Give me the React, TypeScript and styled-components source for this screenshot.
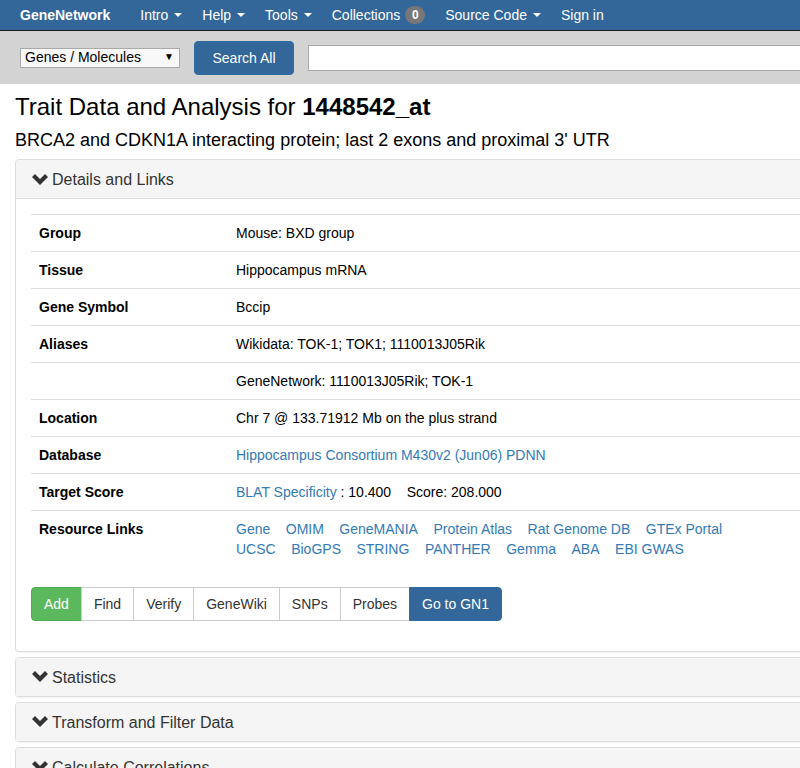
import React from "react";
import styled, { createGlobalStyle } from "styled-components";

const Global = createGlobalStyle`
  html, body { margin: 0; padding: 0; overflow-x: hidden; }
  body {
    font-family: "Liberation Sans", Arial, Helvetica, sans-serif;
    font-size: 14px;
    line-height: 1.42857;
    color: #000;
    background: #fff;
  }
  * { box-sizing: border-box; }
`;

const Page = styled.div`
  width: 1200px;
`;

const NavBar = styled.nav`
  height: 31px;
  background: #336699;
  border-bottom: 1px solid #1a1a1a;
  display: flex;
  align-items: center;
  padding-left: 20px;
  padding-top: 1px;
  color: #fff;
`;

const Brand = styled.span`
  font-weight: bold;
  margin-right: 30px;
`;

const NavItem = styled.span`
  display: inline-flex;
  align-items: center;
  margin-right: 20px;
  color: #fff;
`;

const Caret = styled.span`
  display: inline-block;
  width: 0;
  height: 0;
  margin-left: 6px;
  border-top: 4px solid #fff;
  border-left: 4px solid transparent;
  border-right: 4px solid transparent;
`;

const Badge = styled.span`
  display: inline-block;
  margin-left: 5px;
  min-width: 20px;
  height: 18px;
  padding: 0 6px;
  border-radius: 10px;
  background: #777;
  color: #fff;
  font-size: 12px;
  font-weight: bold;
  line-height: 18px;
  text-align: center;
`;

const SearchBand = styled.div`
  height: 53px;
  background: #d3d3d3;
  display: flex;
  align-items: center;
  padding-left: 20px;
`;

const SelectBox = styled.div`
  width: 160px;
  height: 20px;
  border: 1px solid #a9a9a9;
  background: #f8f8f8;
  display: flex;
  align-items: center;
  justify-content: space-between;
  padding: 0 5px 0 4px;
  font-size: 14px;
  color: #000;
  margin-right: 14px;
`;

const SelectArrow = styled.span`
  font-size: 10px;
`;

const SearchButton = styled.button`
  width: 100px;
  height: 34px;
  background: #336699;
  border: 1px solid #2e6da4;
  border-radius: 4px;
  color: #fff;
  font-family: inherit;
  font-size: 14px;
  margin-right: 14px;
`;

const SearchInput = styled.div`
  width: 600px;
  height: 26px;
  background: #fff;
  border: 1px solid #a9a9a9;
`;

const Content = styled.div`
  padding: 0 0 0 15px;
`;

const Title = styled.h1`
  margin: 7px 0 0;
  font-size: 24px;
  font-weight: normal;
  line-height: 32px;
  color: #000;
`;

const SubTitle = styled.h2`
  margin: 4px 0 6px;
  font-size: 18px;
  font-weight: normal;
  line-height: 26px;
  color: #000;
`;

const Panel = styled.section`
  border: 1px solid #ddd;
  border-radius: 4px;
  margin-bottom: 5px;
  background: #fff;
  box-shadow: 0 1px 1px rgba(0, 0, 0, 0.05);
`;

const PanelHeading = styled.div<{ $open?: boolean }>`
  background: #f5f5f5;
  padding: 10px 15px 9px 16px;
  font-size: 16px;
  line-height: 19px;
  color: #333;
  display: flex;
  align-items: center;
  border-bottom: ${(p) => (p.$open ? "1px solid #ddd" : "none")};
  border-radius: 3px 3px 0 0;
`;

const Chevron = styled.svg`
  width: 16px;
  height: 12px;
  margin-right: 4px;
`;

const PanelBody = styled.div`
  padding: 15px 15px 30px 15px;
`;

const Table = styled.table`
  border-collapse: collapse;
  width: 1100px;
  margin-bottom: 20px;
`;

const Row = styled.tr`
  border-top: 1px solid #ddd;
`;

const Label = styled.td`
  width: 197px;
  padding: 9px 8px 7px;
  font-weight: bold;
  vertical-align: top;
`;

const Value = styled.td`
  padding: 9px 8px 7px;
  vertical-align: top;
`;

const Link = styled.a`
  color: #337ab7;
  text-decoration: none;
`;

const LinkLine = styled.div`
  display: flex;
  gap: 15.5px;
`;

const ButtonGroup = styled.div`
  display: flex;
`;

const GroupButton = styled.button<{ $variant?: "success" | "primary" }>`
  height: 34px;
  padding: 6px 12px;
  font-family: inherit;
  font-size: 14px;
  line-height: 20px;
  margin-left: -1px;
  border: 1px solid
    ${(p) => (p.$variant === "success" ? "#4cae4c" : p.$variant === "primary" ? "#2e6da4" : "#ccc")};
  background: ${(p) => (p.$variant === "success" ? "#5cb85c" : p.$variant === "primary" ? "#336699" : "#fff")};
  color: ${(p) => (p.$variant ? "#fff" : "#333")};
  &:first-child {
    margin-left: 0;
    border-radius: 4px 0 0 4px;
  }
  &:last-child {
    border-radius: 0 4px 4px 0;
  }
`;

const ChevronIcon = () => (
  <Chevron viewBox="0 0 16 12">
    <path d="M0 3 L3 0 L8 5 L13 0 L16 3 L8 11 Z" fill="#333" />
  </Chevron>
);

const resLinks1 = ["Gene", "OMIM", "GeneMANIA", "Protein Atlas", "Rat Genome DB", "GTEx Portal"];
const resLinks2 = ["UCSC", "BioGPS", "STRING", "PANTHER", "Gemma", "ABA", "EBI GWAS"];

export default function App() {
  return (
    <Page>
      <Global />
      <NavBar>
        <Brand>GeneNetwork</Brand>
        <NavItem>Intro<Caret /></NavItem>
        <NavItem>Help<Caret /></NavItem>
        <NavItem>Tools<Caret /></NavItem>
        <NavItem>Collections<Badge>0</Badge></NavItem>
        <NavItem>Source Code<Caret /></NavItem>
        <NavItem>Sign in</NavItem>
      </NavBar>
      <SearchBand>
        <SelectBox>
          <span>Genes / Molecules</span>
          <SelectArrow>▼</SelectArrow>
        </SelectBox>
        <SearchButton>Search All</SearchButton>
        <SearchInput />
      </SearchBand>
      <Content>
        <Title>
          Trait Data and Analysis for <b>1448542_at</b>
        </Title>
        <SubTitle>BRCA2 and CDKN1A interacting protein; last 2 exons and proximal 3' UTR</SubTitle>
        <Panel>
          <PanelHeading $open>
            <ChevronIcon />
            Details and Links
          </PanelHeading>
          <PanelBody>
            <Table>
              <tbody>
                <Row><Label>Group</Label><Value>Mouse: BXD group</Value></Row>
                <Row><Label>Tissue</Label><Value>Hippocampus mRNA</Value></Row>
                <Row><Label>Gene Symbol</Label><Value>Bccip</Value></Row>
                <Row><Label>Aliases</Label><Value>Wikidata: TOK-1; TOK1; 1110013J05Rik</Value></Row>
                <Row><Label></Label><Value>GeneNetwork: 1110013J05Rik; TOK-1</Value></Row>
                <Row><Label>Location</Label><Value>Chr 7 @ 133.71912 Mb on the plus strand</Value></Row>
                <Row>
                  <Label>Database</Label>
                  <Value><Link>Hippocampus Consortium M430v2 (Jun06) PDNN</Link></Value>
                </Row>
                <Row>
                  <Label>Target Score</Label>
                  <Value>
                    <Link>BLAT Specificity</Link> : 10.400&nbsp;&nbsp;&nbsp;&nbsp;Score: 208.000
                  </Value>
                </Row>
                <Row>
                  <Label>Resource Links</Label>
                  <Value>
                    <LinkLine>{resLinks1.map((l) => <Link key={l}>{l}</Link>)}</LinkLine>
                    <LinkLine>{resLinks2.map((l) => <Link key={l}>{l}</Link>)}</LinkLine>
                  </Value>
                </Row>
              </tbody>
            </Table>
            <ButtonGroup>
              <GroupButton $variant="success">Add</GroupButton>
              <GroupButton>Find</GroupButton>
              <GroupButton>Verify</GroupButton>
              <GroupButton>GeneWiki</GroupButton>
              <GroupButton>SNPs</GroupButton>
              <GroupButton>Probes</GroupButton>
              <GroupButton $variant="primary">Go to GN1</GroupButton>
            </ButtonGroup>
          </PanelBody>
        </Panel>
        <Panel>
          <PanelHeading><ChevronIcon />Statistics</PanelHeading>
        </Panel>
        <Panel>
          <PanelHeading><ChevronIcon />Transform and Filter Data</PanelHeading>
        </Panel>
        <Panel>
          <PanelHeading><ChevronIcon />Calculate Correlations</PanelHeading>
        </Panel>
      </Content>
    </Page>
  );
}
